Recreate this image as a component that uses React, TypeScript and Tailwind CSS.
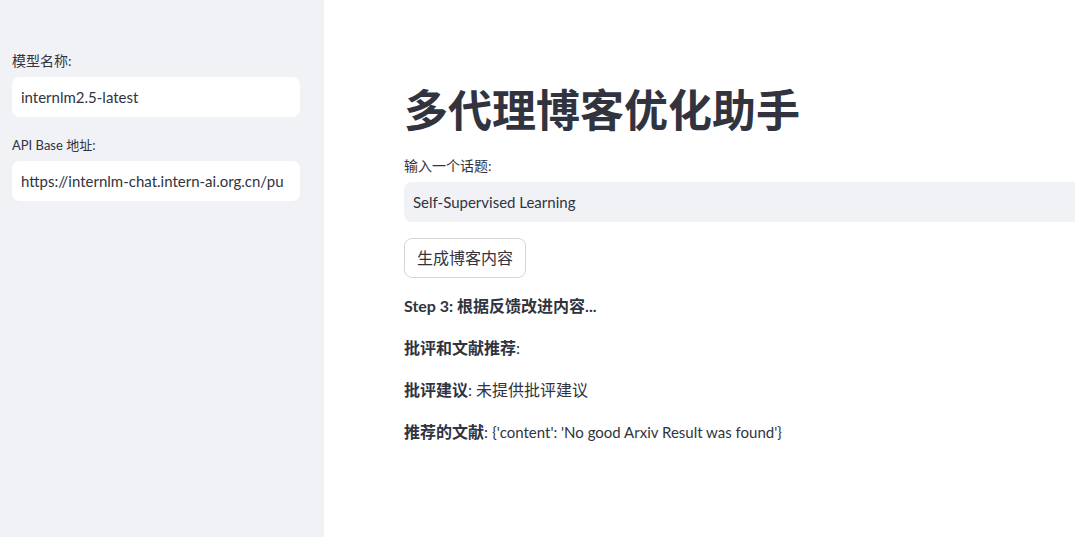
import React from "react";

const font = { fontFamily: '"Lato", "Noto Sans CJK SC", sans-serif' };

function Field({ label, value, small }: { label: string; value: string; small?: boolean }) {
  return (
    <div className="flex flex-col">
      <label className={`${small ? "text-[13px]" : "text-[14px]"} text-[#31333f] h-[24px] leading-[24px] mb-[4px]`}>
        {label}
      </label>
      <div className="h-[40px] rounded-lg bg-white px-[9px] flex items-center overflow-hidden whitespace-nowrap text-[15px] text-[#31333f]">
        {value}
      </div>
    </div>
  );
}

export default function App() {
  return (
    <div className="flex h-[537px] w-full overflow-hidden bg-white" style={font}>
      {/* sidebar */}
      <aside className="w-[324px] shrink-0 bg-[#f0f2f6] pl-3 pr-6 pt-[49px] flex flex-col gap-[16px]">
        <Field label="模型名称:" value="internlm2.5-latest" />
        <Field label="API Base 地址:" value="https://internlm-chat.intern-ai.org.cn/pu" small />
      </aside>

      {/* main */}
      <main className="flex-1 min-w-0 pl-[80px] pt-[78px] text-[#31333f]">
        <h1 className="text-[44px] font-bold leading-[64px] mb-[12px]">多代理博客优化助手</h1>

        <div className="flex flex-col w-[760px]">
          <label className="text-[14px] h-[24px] leading-[24px] mb-[4px]">输入一个话题:</label>
          <div className="h-[40px] rounded-l-lg bg-[#f0f2f6] px-[9px] flex items-center text-[15px]">
            Self-Supervised Learning
          </div>
        </div>

        <button className="mt-[16px] h-[40px] px-[12px] rounded-lg border border-[#d5d6d9] bg-white text-[16px] text-[#31333f]">
          生成博客内容
        </button>

        <div className="mt-[17px] flex flex-col gap-[20px] text-[16px]">
          <p className="font-bold leading-[22px]">Step 3: 根据反馈改进内容...</p>
          <p className="leading-[22px]">
            <span className="font-bold">批评和文献推荐</span>:
          </p>
          <p className="leading-[22px]">
            <span className="font-bold">批评建议</span>: 未提供批评建议
          </p>
          <p className="leading-[22px]">
            <span className="font-bold">推荐的文献</span>: <span className="text-[15px]">{"{'content': 'No good Arxiv Result was found'}"}</span>
          </p>
        </div>
      </main>
    </div>
  );
}
